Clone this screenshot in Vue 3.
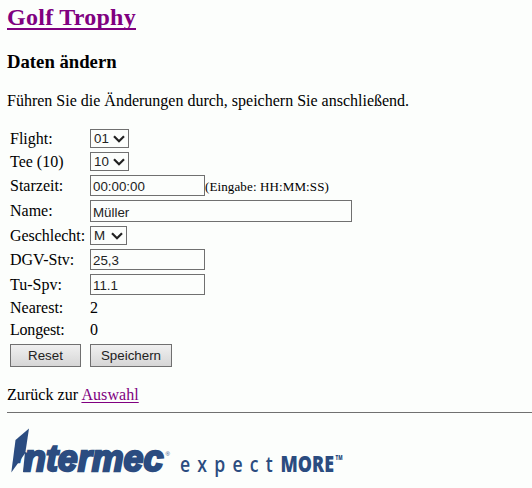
<script setup>
import { ref } from 'vue'

const flight = ref('01')
const tee = ref('10')
const start = ref('00:00:00')
const player = ref('Müller')
const gender = ref('M')
const dgv = ref('25,3')
const spv = ref('11.1')
</script>

<template>
  <main class="page">
    <h2 class="title"><a href="#">Golf Trophy</a></h2>
    <h3 class="subtitle">Daten ändern</h3>
    <p class="intro">Führen Sie die Änderungen durch, speichern Sie anschließend.</p>

    <form class="form" @submit.prevent>
      <label>Flight:</label>
      <div class="select"><span>{{ flight }}</span><svg viewBox="0 0 12 8"><path d="M1 1.2 L6 6.2 L11 1.2" /></svg></div>
      <label>Tee (10)</label>
      <div class="select"><span>{{ tee }}</span><svg viewBox="0 0 12 8"><path d="M1 1.2 L6 6.2 L11 1.2" /></svg></div>
      <label>Starzeit:</label>
      <div class="field"><input v-model="start" /><small>(Eingabe: HH:MM:SS)</small></div>
      <label>Name:</label>
      <div class="field"><input v-model="player" class="wide" /></div>
      <label class="tight">Geschlecht:</label>
      <div class="select narrow"><span>{{ gender }}</span><svg viewBox="0 0 12 8"><path d="M1 1.2 L6 6.2 L11 1.2" /></svg></div>
      <label>DGV-Stv:</label>
      <div class="field"><input v-model="dgv" /></div>
      <label>Tu-Spv:</label>
      <div class="field"><input v-model="spv" /></div>
      <label>Nearest:</label>
      <span>2</span>
      <label class="last">Longest:</label>
      <span class="last">0</span>
      <button type="reset" class="reset">Reset</button>
      <button type="submit" class="save">Speichern</button>
    </form>

    <p class="back">Zurück zur <a href="#">Auswahl</a></p>
    <hr />

    <svg class="logo" width="345" height="60" viewBox="0 0 345 60">
      <text class="brand" x="8" y="38" font-size="22" textLength="7" lengthAdjust="spacingAndGlyphs">I</text>
      <path d="M8.500 16 L22 4.500 L18.300 29 L4.300 48.500 Z" />
      <path d="M18 28 L26 31 L21.500 48 L16 48 Z" />
      <text class="brand" x="17" y="47" font-size="37" textLength="139.500" lengthAdjust="spacingAndGlyphs">ntermec</text>
      <text class="reg" x="158.500" y="32" font-size="6">®</text>
      <text class="expect" transform="translate(173 47.500) scale(.8 1)" font-size="22" textLength="116" lengthAdjust="spacing">expect</text>
      <text class="more" x="273.500" y="47.5" font-size="22.5" textLength="53.5" lengthAdjust="spacingAndGlyphs">MORE</text>
      <text class="more" x="328.500" y="36" font-size="6" textLength="7" lengthAdjust="spacingAndGlyphs">TM</text>
    </svg>
  </main>
</template>

<style>
body { background: #fcfefc; overflow: hidden; }
</style>

<style scoped>
.page {
  box-sizing: border-box;
  height: 488px;
  padding: 4px 0 0 7px;
  overflow: hidden;
  background: #fcfefc;
  color: #000;
  font: 16px/18px "Liberation Serif", "Times New Roman", serif;
}
a { color: #800080; text-decoration-thickness: 1px; text-underline-offset: 2px; text-decoration-skip-ink: none; }
.title { margin: 0; font-size: 24px; line-height: 27px; letter-spacing: 0.27px; }
.title a { text-decoration-thickness: 2px; text-underline-offset: 3px; }
.subtitle { margin: 20px 0 0; font-size: 18.72px; line-height: 22px; letter-spacing: 0; }
.intro { margin: 19px 0 0; white-space: nowrap; }
.form {
  display: grid;
  grid-template-columns: 76px 262px;
  grid-template-rows: 19px 19px 21px 22px 19px 21px 21px 18px 19px 23px;
  column-gap: 4px;
  row-gap: 4px;
  align-items: center;
  margin: 19px 0 0 3px;
  white-space: nowrap;
}
.tight { letter-spacing: -0.04px; }
.last { align-self: start; letter-spacing: -0.2px; }
.select {
  display: flex;
  box-sizing: border-box;
  align-items: center;
  justify-content: space-between;
  width: 39px;
  height: 19px;
  padding: 0 3px;
  border: 1px solid #707070;
  color: #222;
  font: 13.33px/17px "Liberation Sans", Arial, sans-serif;
}
.select.narrow { width: 37px; }
.select svg { width: 12px; height: 8px; fill: none; stroke: #222; stroke-width: 2.2; }
.field { display: flex; align-items: center; height: 100%; }
input {
  box-sizing: border-box;
  width: 115px;
  height: 100%;
  margin: 0;
  padding: 2px 2px 0;
  border: 1px solid #707070;
  border-radius: 0;
  background: #fcfefc;
  color: #222;
  font: 13.33px "Liberation Sans", Arial, sans-serif;
}
.wide { width: 262px; }
small { font-size: 13px; padding-top: 2px; letter-spacing: 0.12px; }
button {
  height: 23px;
  margin: 0;
  padding: 0;
  border: 1px solid #707070;
  border-radius: 0;
  background: linear-gradient(#f0f0f0, #d6d6d6);
  color: #222;
  font: 13.33px "Liberation Sans", Arial, sans-serif;
}
.reset { width: 71px; }
.save { width: 82px; }
.back { margin: 19px 0 0; letter-spacing: 0.06px; }
hr { height: 1px; margin: 8px 0 0; border: 0; background: #707070; }
.logo { display: block; margin-top: 11px; fill: #2b4c80; }
.brand { font-family: "Liberation Sans", Arial, sans-serif; font-weight: 700; font-style: italic; stroke: #2b4c80; stroke-width: 2.3; }
.expect { font-family: "Open Sans", sans-serif; font-weight: 600; }
.more { font-family: "Open Sans", sans-serif; font-weight: 800; }
.reg { font-family: "Liberation Sans", sans-serif; }
</style>
